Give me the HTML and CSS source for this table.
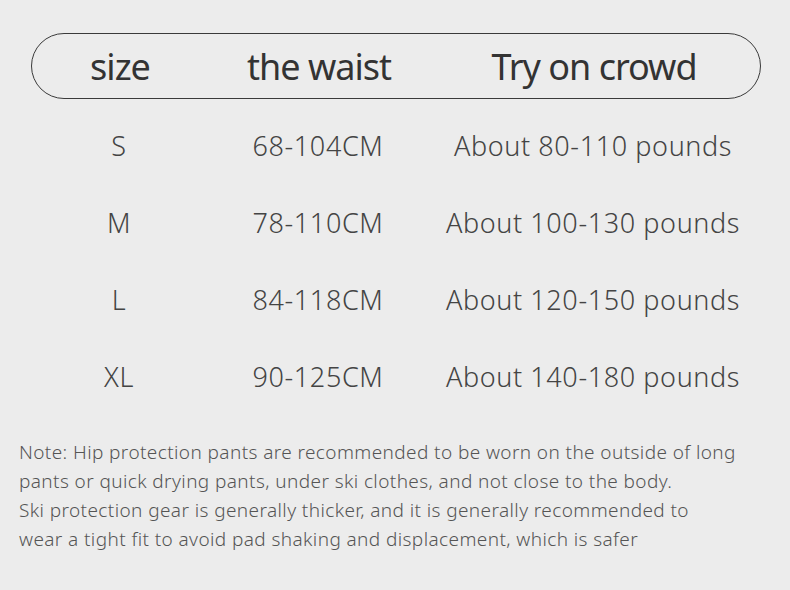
FILE: index.html
```html
<!DOCTYPE html>
<html>
<head>
<meta charset="utf-8">
<link rel="stylesheet" href="styles.css">
</head>
<body>
<div class="page">
  <div class="head">
    <div class="cell">size</div>
    <div class="cell">the waist</div>
    <div class="cell">Try on crowd</div>
  </div>
  <div class="rows">
    <div class="row"><div class="cell">S</div><div class="cell">68-104CM</div><div class="cell">About 80-110 pounds</div></div>
    <div class="row"><div class="cell">M</div><div class="cell">78-110CM</div><div class="cell">About 100-130 pounds</div></div>
    <div class="row"><div class="cell">L</div><div class="cell">84-118CM</div><div class="cell">About 120-150 pounds</div></div>
    <div class="row"><div class="cell">XL</div><div class="cell">90-125CM</div><div class="cell">About 140-180 pounds</div></div>
  </div>
  <p class="note">Note: Hip protection pants are recommended to be worn on the outside of long<br>pants or quick drying pants, under ski clothes, and not close to the body.<br>Ski protection gear is generally thicker, and it is generally recommended to<br>wear a tight fit to avoid pad shaking and displacement, which is safer</p>
</div>
</body>
</html>
```
FILE: styles.css
```css
html, body {
  margin: 0;
  padding: 0;
  background: #ececec;
}
.page {
  width: 790px;
  height: 590px;
  padding-top: 33px;
  box-sizing: border-box;
  font-family: "Noto Sans", "Open Sans", sans-serif;
}
.head, .row {
  display: grid;
  grid-template-columns: 176px 222px 328px;
  margin-left: 31px;
  width: 730px;
}
.head {
  box-sizing: border-box;
  height: 66px;
  border: 1.3px solid #3a3a3a;
  border-radius: 33px;
  align-items: center;
  font-size: 36px;
  color: #333;
  letter-spacing: -1px;
}
.cell {
  text-align: center;
  white-space: nowrap;
}
.rows {
  padding-top: 8px;
}
.row {
  height: 77px;
  align-items: center;
  font-size: 27px;
  font-weight: 300;
  letter-spacing: 0.6px;
  color: #444;
}
.note {
  margin: 23px 0 0 19px;
  font-size: 19px;
  line-height: 29px;
  letter-spacing: 0.4px;
  color: #555;
  font-weight: 300;
}
```
